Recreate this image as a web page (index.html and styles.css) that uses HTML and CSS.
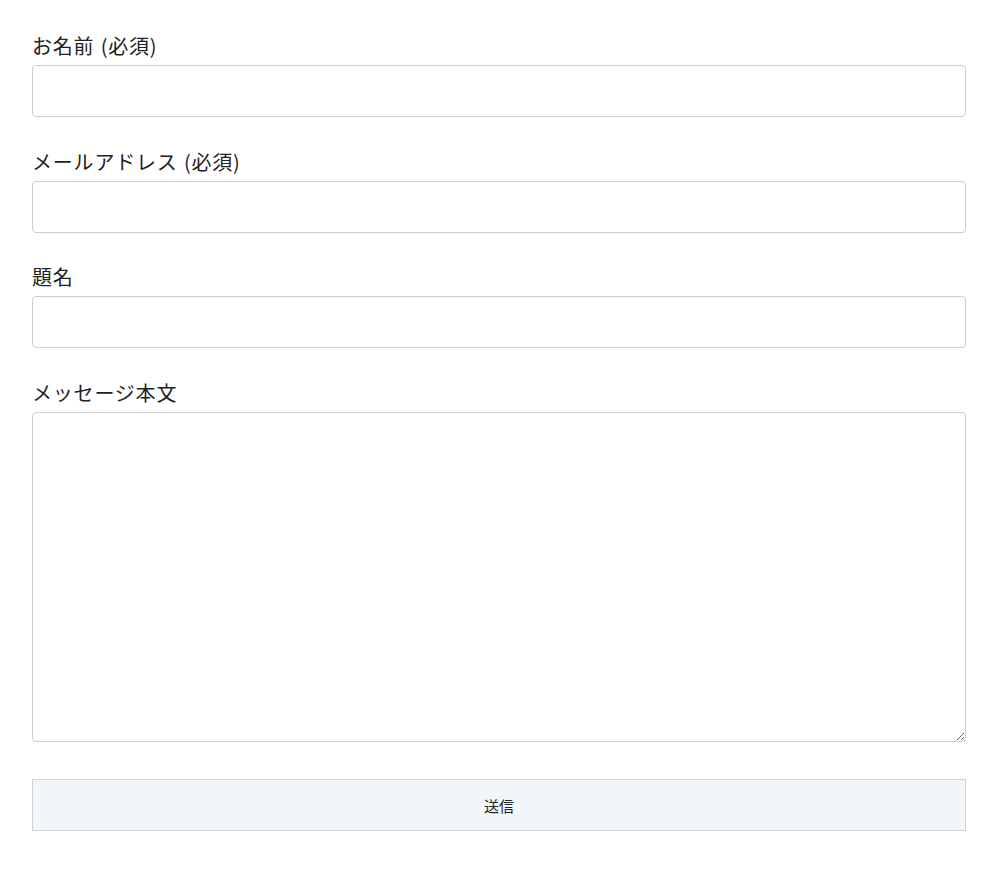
FILE: index.html
```html
<!DOCTYPE html>
<html lang="ja">
<head>
<meta charset="utf-8">
<link rel="stylesheet" href="styles.css">
</head>
<body>
<form class="form">
  <div class="field">
    <label class="label">お名前 (必須)</label>
    <input class="control" type="text">
  </div>
  <div class="field">
    <label class="label">メールアドレス (必須)</label>
    <input class="control" type="email">
  </div>
  <div class="field">
    <label class="label">題名</label>
    <input class="control" type="text">
  </div>
  <div class="field field-last">
    <label class="label">メッセージ本文</label>
    <textarea class="control area"></textarea>
  </div>
  <button class="submit" type="button">送信</button>
</form>
</body>
</html>
```
FILE: styles.css
```css
html, body {
  margin: 0;
  background: #fff;
}
body {
  padding: 32px 34px 32px 32px;
  font-family: "Noto Sans CJK JP", "Noto Sans", sans-serif;
  color: #222;
}
.form {
  display: flex;
  flex-direction: column;
}
.field {
  display: flex;
  flex-direction: column;
  margin-bottom: 30.6px;
}
.label {
  font-size: 20px;
  line-height: 28px;
  margin-bottom: 5px;
  letter-spacing: 0.8px;
  word-spacing: 1px;
}
.control {
  box-sizing: border-box;
  height: 52px;
  width: 100%;
  border: 1px solid #cccccc;
  border-radius: 4px;
  background: #fff;
  margin: 0;
  padding: 8px 12px;
  font: inherit;
}
.area {
  height: 330.5px;
  resize: vertical;
  display: block;
}
.field-last {
  margin-bottom: 37px;
}
.submit {
  box-sizing: border-box;
  height: 52px;
  width: 100%;
  border: 1px solid #cfd3d7;
  border-radius: 0;
  background: #f3f6f9;
  font-family: "Noto Sans CJK JP", sans-serif;
  font-size: 15px;
  color: #222;
  margin: 0;
}
```
